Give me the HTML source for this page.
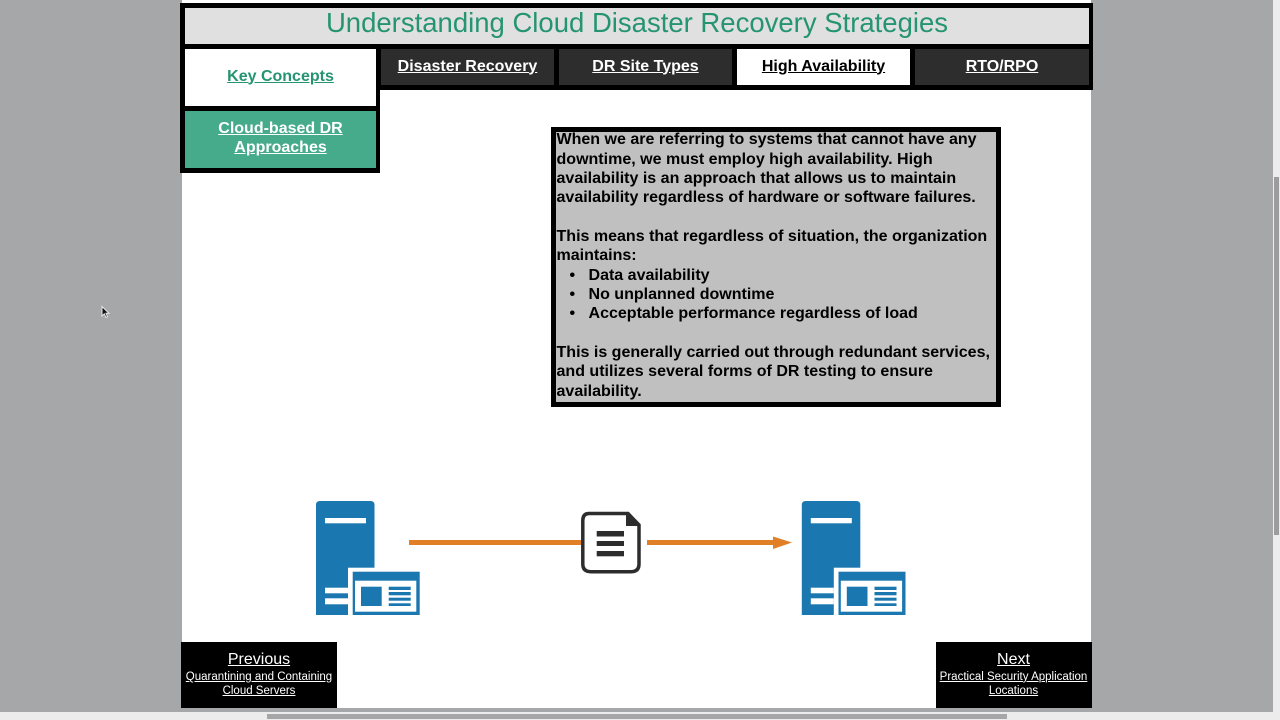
<!DOCTYPE html>
<html>
<head>
<meta charset="utf-8">
<style>
html,body{margin:0;padding:0;width:1280px;height:720px;overflow:hidden;background:#a6a7a9;font-family:"Liberation Sans",sans-serif}
.a{position:absolute;box-sizing:border-box}
a,u{color:inherit;text-decoration:underline}
.tab{top:49px;height:36px;background:#2d2d2d;color:#fff;font-weight:bold;font-size:16px;line-height:19.3px;text-align:center;padding-top:7.500px}
.side{left:185px;width:191px;height:57px;font-weight:bold;font-size:16px;line-height:19.3px;text-align:center}
.txt{left:556.500px;top:130.400px;width:440px;font-weight:bold;font-size:16.03px;line-height:19.330px;color:#000;white-space:nowrap}
.nav{top:642px;height:66px;background:#000;color:#fff;text-align:center;font-size:16px;line-height:19.3px}
.nav .s{font-size:11.5px;line-height:14px;display:block;margin-top:0.500px;white-space:nowrap}
</style>
</head>
<body>
<div class="a" style="left:182px;top:0;width:909px;height:708px;background:#fff"></div>

<div class="a" style="left:180px;top:3px;width:913px;height:87px;background:#000"></div>
<div class="a" style="left:185px;top:8px;width:904px;height:36px;background:#e0e0e0;color:#259470;font-size:27.5px;line-height:30px;text-align:center;white-space:nowrap">Understanding Cloud Disaster Recovery Strategies</div>

<div class="a" style="left:180px;top:44px;width:200px;height:129px;background:#000"></div>
<div class="a side" style="top:49px;background:#fff;color:#259470;padding-top:17.500px"><u>Key Concepts</u></div>
<div class="a side" style="top:111px;background:#46ab8a;color:#fff;padding-top:7.800px"><u>Cloud-based DR<br>Approaches</u></div>

<div class="a tab" style="left:381px;width:173px"><u>Disaster Recovery</u></div>
<div class="a tab" style="left:559px;width:173px"><u>DR Site Types</u></div>
<div class="a tab" style="left:737px;width:173px;background:#fff;color:#000"><u>High Availability</u></div>
<div class="a tab" style="left:915px;width:174px"><u>RTO/RPO</u></div>

<div class="a" style="left:551px;top:127px;width:450px;height:280px;background:#c0c0c0;border:5px solid #000"></div>
<div class="a txt">
When we are referring to systems that cannot have any<br>
downtime, we must employ high availability. High<br>
availability is an approach that allows us to maintain<br>
availability regardless of hardware or software failures.<br>
<br>
This means that regardless of situation, the organization<br>
maintains:<br>
<span style="display:inline-block;width:32px;text-indent:13px">•</span>Data availability<br>
<span style="display:inline-block;width:32px;text-indent:13px">•</span>No unplanned downtime<br>
<span style="display:inline-block;width:32px;text-indent:13px">•</span>Acceptable performance regardless of load<br>
<br>
This is generally carried out through redundant services,<br>
and utilizes several forms of DR testing to ensure<br>
availability.
</div>

<svg class="a" style="left:0;top:0" width="1280" height="720" viewBox="0 0 1280 720">
  <defs>
    <g id="srv">
      <path d="M0 114V4Q0 0 4 0H54.500Q58.500 0 58.500 4V114Z" fill="#1a77b0"/>
      <rect x="9" y="17" width="41" height="5.300" fill="#fff"/>
      <rect x="9" y="86.700" width="23" height="5.600" fill="#fff"/>
      <rect x="9" y="97.300" width="23" height="6" fill="#fff"/>
      <rect x="32" y="66.700" width="76" height="47.300" fill="#fff"/>
      <rect x="36.700" y="70.700" width="67" height="43.300" fill="#1a77b0"/>
      <rect x="39" y="79.700" width="61.300" height="31" fill="#fff"/>
      <rect x="45" y="85.700" width="20.700" height="19.300" fill="#1a77b0"/>
      <rect x="72.700" y="85.700" width="22" height="3.300" fill="#1a77b0"/>
      <rect x="72.700" y="91" width="22" height="3.300" fill="#1a77b0"/>
      <rect x="72.700" y="96.700" width="22" height="3" fill="#1a77b0"/>
      <rect x="72.700" y="102.300" width="22" height="2.700" fill="#1a77b0"/>
    </g>
  </defs>
  <use href="#srv" x="316" y="501"/>
  <use href="#srv" x="801.800" y="501"/>
  <rect x="409" y="540" width="172" height="5" fill="#e07f26"/>
  <rect x="647" y="540" width="130" height="5" fill="#e07f26"/>
  <path d="M773 536.500L792 542.500L773 549Z" fill="#e07f26"/>
  <path d="M589 513.500H628L639 525V564Q639 571.700 631 571.700H591Q582.800 571.700 582.800 564V520.500Q582.800 513.500 589 513.500Z" fill="#fff" stroke="#2d2d2d" stroke-width="3.500"/>
  <path d="M626 514L639.500 526H626Z" fill="#2d2d2d"/>
  <rect x="596.700" y="531" width="27.300" height="5.500" fill="#2d2d2d"/>
  <rect x="596.700" y="541" width="27.300" height="5" fill="#2d2d2d"/>
  <rect x="596.700" y="551" width="27.300" height="5.300" fill="#2d2d2d"/>
  <path d="M102 306.500V316L104.300 313.800L106 317.500L107.500 316.800L106 313.300H109Z" fill="#111" stroke="#e8e8e8" stroke-width="1"/>
</svg>

<div class="a nav" style="left:181px;width:156px;padding-top:8px"><u>Previous</u><span class="s"><u>Quarantining and Containing<br>Cloud Servers</u></span></div>
<div class="a nav" style="left:935.500px;width:156px;padding-top:8px"><u>Next</u><span class="s"><u>Practical Security Application<br>Locations</u></span></div>

<div class="a" style="left:1273px;top:0;width:7px;height:720px;background:#ececee"></div>
<div class="a" style="left:1274px;top:177px;width:5px;height:358px;background:#9c9c9e"></div>
<div class="a" style="left:0;top:712px;width:1280px;height:8px;background:#ececec"></div>
<div class="a" style="left:267px;top:714px;width:740px;height:5px;background:#a6a6a8"></div>
</body>
</html>
